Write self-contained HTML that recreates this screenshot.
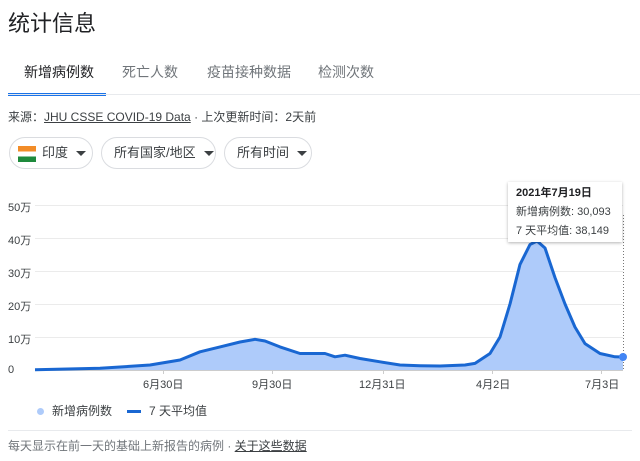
<!DOCTYPE html>
<html><head><meta charset="utf-8"><style>
body{margin:0;width:640px;height:461px;background:#fff;font-family:"Liberation Sans","Noto Sans CJK SC",sans-serif;color:#202124;position:relative;overflow:hidden}
.a{position:absolute;white-space:nowrap}
.tab{font-size:14px;color:#70757a;top:62px}
.chip{position:absolute;top:137px;height:32px;border:1px solid #dadce0;border-radius:16px;box-sizing:border-box;font-size:13px;color:#3c4043;line-height:30px}
.car{display:inline-block;width:0;height:0;border-left:5px solid transparent;border-right:5px solid transparent;border-top:5px solid #3c4043;vertical-align:middle;margin-left:8px}
.yl{font-size:11px;color:#3c4043;left:8px}
.xl{font-size:11px;color:#3c4043;top:376px}
</style></head><body>
<div class="a" style="left:8px;top:6px;font-size:22px;color:#202124">统计信息</div>
<div class="a tab" style="left:24px;color:#202124">新增病例数</div>
<div class="a tab" style="left:122px">死亡人数</div>
<div class="a tab" style="left:207px">疫苗接种数据</div>
<div class="a tab" style="left:318px">检测次数</div>
<div class="a" style="left:8px;top:93px;width:98px;height:3px;background:#1a73e8"></div>
<div class="a" style="left:8px;top:94px;width:632px;height:1px;background:#e8eaed"></div>
<div class="a" style="left:8px;top:108px;font-size:12px;color:#3c4043">来源：<span style="text-decoration:underline">JHU CSSE COVID-19 Data</span> · 上次更新时间：2天前</div>
<div class="chip" style="left:9px;width:84px;padding-left:8px"><span style="display:inline-block;width:18px;height:16px;vertical-align:middle;margin-right:6px;background:linear-gradient(#f28c28 0 33%,#fff 33% 66%,#1e8a3c 66%)"></span>印度<span class="car"></span></div>
<div class="chip" style="left:101px;width:115px;padding-left:12px">所有国家/地区<span class="car"></span></div>
<div class="chip" style="left:224px;width:88px;padding-left:12px">所有时间<span class="car"></span></div>
<div class="a yl" style="top:199px">50万</div>
<div class="a yl" style="top:232px">40万</div>
<div class="a yl" style="top:265px">30万</div>
<div class="a yl" style="top:298px">20万</div>
<div class="a yl" style="top:331px">10万</div>
<div class="a yl" style="top:364px">0</div>
<svg class="a" style="left:0;top:0" width="640" height="461">
<g stroke="#ebebeb" stroke-width="1">
<line x1="35" x2="623" y1="205.5" y2="205.5"/><line x1="35" x2="623" y1="238.5" y2="238.5"/><line x1="35" x2="623" y1="271.5" y2="271.5"/><line x1="35" x2="623" y1="304.5" y2="304.5"/><line x1="35" x2="623" y1="337.5" y2="337.5"/>
</g>
<line x1="623.5" x2="623.5" y1="215" y2="370" stroke="#777" stroke-dasharray="1,2"/>
<path d="M35,370 L35,369.7 L100,368.3 L150,365 L180,360 L200,351.8 L220,346.9 L240,342 L255,339.3 L265,341 L280,346.9 L300,353.5 L325,353.5 L335,356.8 L345,355.2 L360,358.5 L380,361.8 L400,365 L420,365.7 L440,366 L465,365 L475,363.4 L490,353.5 L500,337 L510,304 L520,264.4 L530,244.6 L537,239 L545,248 L555,277.6 L565,304 L575,327.1 L585,343.6 L600,353.5 L615,356.8 L623,357 L623,370 Z" fill="#aecbfa"/>
<line x1="35" x2="623" y1="370.5" y2="370.5" stroke="#ccc"/>
<path d="M35,369.7 L100,368.3 L150,365 L180,360 L200,351.8 L220,346.9 L240,342 L255,339.3 L265,341 L280,346.9 L300,353.5 L325,353.5 L335,356.8 L345,355.2 L360,358.5 L380,361.8 L400,365 L420,365.7 L440,366 L465,365 L475,363.4 L490,353.5 L500,337 L510,304 L520,264.4 L530,244.6 L537,241 L545,248 L555,277.6 L565,304 L575,327.1 L585,343.6 L600,353.5 L615,356.8 L623,357" fill="none" stroke="#1967d2" stroke-width="3" stroke-linejoin="round"/>
<circle cx="623" cy="357" r="4" fill="#4285f4"/>
<g stroke="#ccc"><line x1="163.5" x2="163.5" y1="370" y2="374"/><line x1="272.5" x2="272.5" y1="370" y2="374"/><line x1="383.5" x2="383.5" y1="370" y2="374"/><line x1="492.5" x2="492.5" y1="370" y2="374"/><line x1="601.5" x2="601.5" y1="370" y2="374"/></g>
</svg>
<div class="a xl" style="left:143px">6月30日</div>
<div class="a xl" style="left:252px">9月30日</div>
<div class="a xl" style="left:359px">12月31日</div>
<div class="a xl" style="left:476px">4月2日</div>
<div class="a xl" style="left:585px">7月3日</div>
<div class="a" style="left:508px;top:182px;width:114px;height:60px;background:#fff;box-shadow:0 1px 3px rgba(0,0,0,.3);font-size:11px;line-height:19px;color:#3c4043;padding:2px 8px;box-sizing:border-box">
<b style="color:#202124">2021年7月19日</b><br>新增病例数: 30,093<br>7 天平均值: 38,149</div>
<div class="a" style="left:37px;top:402px;font-size:12px;color:#3c4043"><span style="display:inline-block;width:7px;height:7px;border-radius:50%;background:#aecbfa;margin-right:8px"></span>新增病例数</div>
<div class="a" style="left:127px;top:402px;font-size:12px;color:#3c4043"><span style="display:inline-block;width:14px;height:3px;background:#1967d2;vertical-align:middle;margin-right:8px"></span>7 天平均值</div>
<div class="a" style="left:8px;top:430px;width:624px;height:1px;background:#e8eaed"></div>
<div class="a" style="left:8px;top:437px;font-size:12px;color:#70757a">每天显示在前一天的基础上新报告的病例 · <span style="text-decoration:underline;color:#3c4043">关于这些数据</span></div>
</body></html>
